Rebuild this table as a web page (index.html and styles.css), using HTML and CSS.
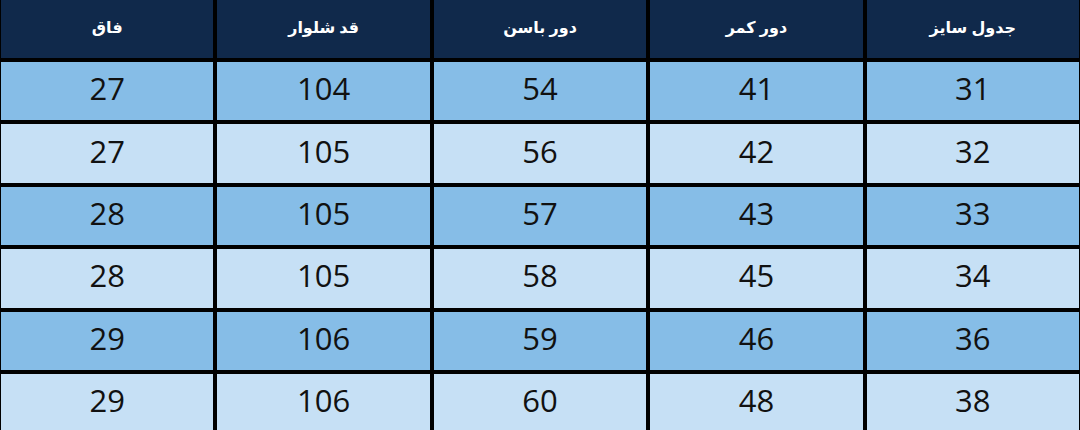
FILE: index.html
```html
<!DOCTYPE html>
<html lang="fa" dir="rtl">
<head>
<meta charset="utf-8">
<link rel="stylesheet" href="styles.css">
</head>
<body>
<div class="size-table">
  <div class="cell head">جدول سایز</div>
  <div class="cell head">دور کمر</div>
  <div class="cell head">دور باسن</div>
  <div class="cell head">قد شلوار</div>
  <div class="cell head">فاق</div>

  <div class="cell dark">31</div><div class="cell dark">41</div><div class="cell dark">54</div><div class="cell dark">104</div><div class="cell dark">27</div>
  <div class="cell light">32</div><div class="cell light">42</div><div class="cell light">56</div><div class="cell light">105</div><div class="cell light">27</div>
  <div class="cell dark">33</div><div class="cell dark">43</div><div class="cell dark">57</div><div class="cell dark">105</div><div class="cell dark">28</div>
  <div class="cell light">34</div><div class="cell light">45</div><div class="cell light">58</div><div class="cell light">105</div><div class="cell light">28</div>
  <div class="cell dark">36</div><div class="cell dark">46</div><div class="cell dark">59</div><div class="cell dark">106</div><div class="cell dark">29</div>
  <div class="cell light">38</div><div class="cell light">48</div><div class="cell light">60</div><div class="cell light">106</div><div class="cell light">29</div>
</div>
</body>
</html>
```
FILE: styles.css
```css
html, body {
  margin: 0;
  padding: 0;
  background: #ffffff;
  overflow: hidden;
}
.size-table {
  width: 1080px;
  box-sizing: border-box;
  display: grid;
  grid-template-columns: repeat(5, 1fr);
  grid-template-rows: 58px repeat(6, 58.4px);
  gap: 4px;
  padding: 0 1px;
  background: #000000;
  font-family: "Noto Sans", "DejaVu Sans", sans-serif;
}
.cell {
  display: flex;
  align-items: center;
  justify-content: center;
}
.head {
  background: #10294b;
  color: #ffffff;
  font-weight: 600;
  font-size: 16px;
  padding-bottom: 4px;
  box-sizing: border-box;
}
.dark,
.light {
  color: #111111;
  font-size: 31px;
  font-family: "Open Sans", "Noto Sans", sans-serif;
  padding-bottom: 6px;
  box-sizing: border-box;
}
.dark {
  background: #86bde7;
}
.light {
  background: #c6e0f5;
}
```
